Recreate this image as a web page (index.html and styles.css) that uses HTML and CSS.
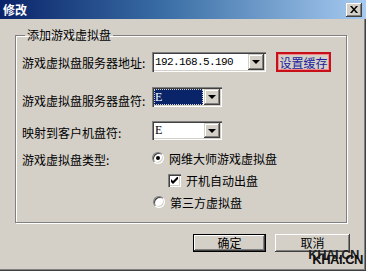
FILE: index.html
```html
<!DOCTYPE html>
<html lang="zh-CN">
<head>
  <meta charset="UTF-8" />
  <title>修改</title>
  <link rel="stylesheet" href="styles.css">
</head>
<body>
  <div class="window">
    <div class="titlebar">
      <span class="title">修改</span>
      <span class="close-btn">
        <svg width="8" height="7" viewBox="0 0 8 7"><path d="M0 0h2l2 2.5L6 0h2L5 3.5 8 7H6L4 4.5 2 7H0l3-3.5z" fill="#000"/></svg>
      </span>
    </div>

    <div class="client">
      <fieldset class="group">
        <legend>添加游戏虚拟盘</legend>

        <div class="row row-server">
          <label class="label">游戏虚拟盘服务器地址:</label>
          <div class="combo combo-wide">
            <span class="combo-value mono">192.168.5.190</span>
            <span class="combo-btn"></span>
          </div>
          <a class="cache-link">设置缓存</a>
        </div>

        <div class="row row-drive">
          <label class="label">游戏虚拟盘服务器盘符:</label>
          <div class="combo combo-small">
            <span class="combo-value selected">E</span>
            <span class="combo-btn"></span>
          </div>
        </div>

        <div class="row row-map">
          <label class="label">映射到客户机盘符:</label>
          <div class="combo combo-small">
            <span class="combo-value">E</span>
            <span class="combo-btn"></span>
          </div>
        </div>

        <div class="row row-type">
          <label class="label">游戏虚拟盘类型:</label>
          <div class="option">
            <span class="radio checked"></span>
            <span>网维大师游戏虚拟盘</span>
          </div>
        </div>

        <div class="row row-check">
          <div class="option">
            <span class="checkbox">
              <svg width="7" height="7" viewBox="0 0 7 7"><path d="M0 2v3l2 2 5-5V-1L2 4z" fill="#000"/></svg>
            </span>
            <span>开机自动出盘</span>
          </div>
        </div>

        <div class="row row-third">
          <div class="option">
            <span class="radio"></span>
            <span>第三方虚拟盘</span>
          </div>
        </div>
      </fieldset>

      <div class="buttons">
        <button class="btn btn-default">确定</button>
        <button class="btn">取消</button>
      </div>

      <div class="watermark">KHAI.CN<span class="watermark-shadow">KHAI.CN</span></div>
    </div>
  </div>
</body>
</html>
```

FILE: styles.css
```css
body {
  margin: 0;
  font-family: "Noto Sans CJK SC", "Liberation Sans", sans-serif;
  font-size: 12px;
  color: #000;
  background: #d4d0c8;
}

.window {
  position: relative;
  width: 366px;
  height: 271px;
  background: #d4d0c8;
  box-sizing: border-box;
  box-shadow: inset -1px -1px 0 #404040, inset -2px -2px 0 #808080;
  overflow: hidden;
}

.titlebar {
  height: 19px;
  display: flex;
  align-items: center;
  justify-content: space-between;
  padding: 0 4px 0 3px;
  background: linear-gradient(to right, #0a246a, #3a6ea5 45%, #a6caf0);
}
.title {
  color: #fff;
  font-weight: bold;
  font-size: 12px;
  line-height: 19px;
}
.close-btn {
  width: 16px;
  height: 14px;
  box-sizing: border-box;
  display: flex;
  align-items: center;
  justify-content: center;
  background: #d4d0c8;
  box-shadow: inset -1px -1px 0 #404040, inset 1px 1px 0 #fff, inset -2px -2px 0 #808080;
}

.client {
  padding: 9px 0 0 15px;
}

/* 分组框 */
.group {
  margin: 0;
  padding: 10px 0 0 6px;
  width: 332px;
  height: 195px;
  box-sizing: border-box;
  min-width: 0;
  border: 1px solid #808080;
  box-shadow: 1px 1px 0 #fff, inset 1px 1px 0 #fff;
}
.group legend {
  padding: 0 2px;
  margin-left: 3px;
  line-height: 14px;
}

.row {
  display: flex;
  align-items: center;
}
.label {
  width: 130px;
  flex: none;
  white-space: nowrap;
}
.row-server { height: 20px; }
.row-drive { height: 20px; margin-top: 15px; }
.row-map { height: 19px; margin-top: 14px; }
.row-type { height: 14px; margin-top: 11px; }
.row-check { height: 14px; margin-top: 8px; padding-left: 146px; }
.row-third { height: 14px; margin-top: 8px; padding-left: 131px; }
.row-drive .label { padding-top: 6px; }
.row-map .label { padding-top: 4px; }
.row-type .label { padding-top: 3px; }

.combo {
  height: 100%;
  box-sizing: border-box;
  display: flex;
  align-items: center;
  padding: 2px;
  background: #fff;
  box-shadow: inset 1px 1px 0 #808080, inset 2px 2px 0 #404040, inset -1px -1px 0 #fff, inset -2px -2px 0 #d4d0c8;
}
.combo-wide { width: 114px; }
.combo-small { width: 70px; }
.combo-value {
  flex: 1;
  height: 100%;
  box-sizing: border-box;
  padding-left: 1px;
  display: flex;
  align-items: center;
  font-family: "Liberation Serif", serif;
  font-size: 12px;
}
.combo-value.mono {
  font-family: "Liberation Mono", monospace;
  font-size: 11px;
  letter-spacing: -0.6px;
}
.combo-value.selected {
  background: #0a246a;
  color: #fff;
  outline: 1px dotted #d4d0c8;
  outline-offset: -1px;
  margin-right: 1px;
}
.combo-btn {
  width: 16px;
  height: 100%;
  flex: none;
  box-sizing: border-box;
  background: #d4d0c8;
  box-shadow: inset -1px -1px 0 #404040, inset 1px 1px 0 #d4d0c8, inset -2px -2px 0 #808080, inset 2px 2px 0 #fff;
  position: relative;
}
.combo-btn::after {
  content: "";
  position: absolute;
  left: 4px;
  top: 50%;
  margin-top: -2px;
  border-left: 4px solid transparent;
  border-right: 4px solid transparent;
  border-top: 4px solid #000;
}

.cache-link {
  margin-left: 10px;
  width: 55px;
  height: 20px;
  box-sizing: border-box;
  display: flex;
  align-items: center;
  justify-content: center;
  border: 2px solid #c8101a;
  box-shadow: inset 0 0 0 1px #f08a8a;
  color: #20209c;
  text-decoration: none;
}

.option {
  display: flex;
  align-items: center;
  gap: 5px;
  white-space: nowrap;
}
.radio {
  width: 12px;
  height: 12px;
  box-sizing: border-box;
  border-radius: 50%;
  background: #fff;
  border: 1px solid;
  border-color: #808080 #fff #fff #808080;
  box-shadow: inset 1px 1px 0 #404040, inset -1px -1px 0 #d4d0c8;
  position: relative;
}
.radio.checked::after {
  content: "";
  position: absolute;
  left: 3px;
  top: 3px;
  width: 4px;
  height: 4px;
  border-radius: 50%;
  background: #000;
}
.checkbox {
  width: 13px;
  height: 13px;
  box-sizing: border-box;
  background: #fff;
  display: flex;
  align-items: center;
  justify-content: center;
  box-shadow: inset 1px 1px 0 #808080, inset 2px 2px 0 #404040, inset -1px -1px 0 #fff, inset -2px -2px 0 #d4d0c8;
}

.buttons {
  display: flex;
  justify-content: flex-end;
  gap: 9px;
  padding-right: 16px;
  margin-top: 11px;
}
.btn {
  width: 75px;
  height: 18px;
  padding: 0;
  font-family: inherit;
  font-size: 12px;
  line-height: 14px;
  background: #d4d0c8;
  border: none;
  box-shadow: inset -1px -1px 0 #404040, inset 1px 1px 0 #fff, inset -2px -2px 0 #808080;
}
.btn-default {
  width: 73px;
  box-shadow: inset 0 0 0 1px #000, inset -2px -2px 0 #404040, inset 2px 2px 0 #fff, inset -3px -3px 0 #808080;
}

.watermark {
  position: absolute;
  right: 7px;
  bottom: 10px;
  font-family: "Liberation Sans", sans-serif;
  font-weight: bold;
  font-size: 13px;
  line-height: 12px;
  color: #222;
  letter-spacing: -0.5px;
}
.watermark-shadow {
  position: absolute;
  left: 4px;
  top: 5px;
  color: #111;
}
```
